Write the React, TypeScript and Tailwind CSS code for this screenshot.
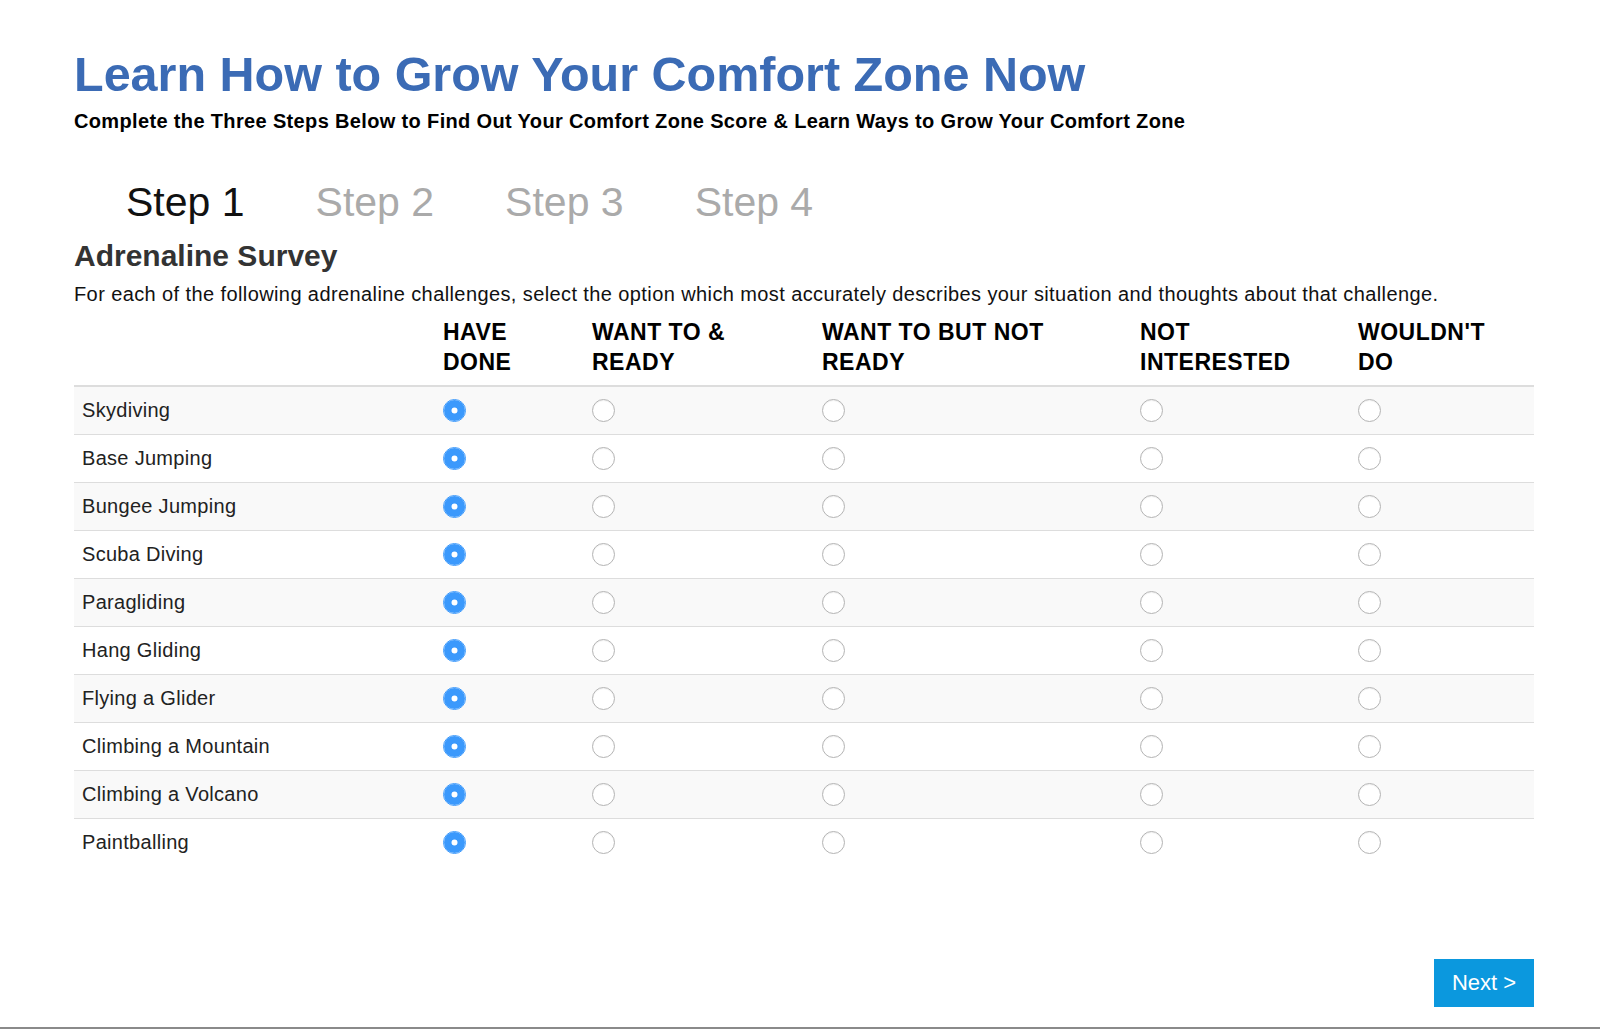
import { useState } from 'react';

const activities = [
  'Skydiving',
  'Base Jumping',
  'Bungee Jumping',
  'Scuba Diving',
  'Paragliding',
  'Hang Gliding',
  'Flying a Glider',
  'Climbing a Mountain',
  'Climbing a Volcano',
  'Paintballing',
];

const options = [
  { key: 'done', lines: ['HAVE', 'DONE'], width: 'w-[149px]' },
  { key: 'ready', lines: ['WANT TO &', 'READY'], width: 'w-[230px]' },
  { key: 'notready', lines: ['WANT TO BUT NOT', 'READY'], width: 'w-[318px]' },
  { key: 'notint', lines: ['NOT', 'INTERESTED'], width: 'w-[218px]' },
  { key: 'never', lines: ["WOULDN'T", 'DO'], width: 'w-[184px]' },
];

const steps = ['Step 1', 'Step 2', 'Step 3', 'Step 4'];

export default function App() {
  const [answers, setAnswers] = useState<Record<string, string>>(
    Object.fromEntries(activities.map(a => [a, 'done']))
  );

  return (
    <div className="min-h-[1029px] bg-white flex flex-col font-['Liberation_Sans',Arial,sans-serif] text-[#111]">
      <div className="flex-1 pl-[74px] pr-[66px] pt-[48px]">
        <h1 className="text-[48.5px] leading-[53px] font-bold text-[#3b6bb5]">
          Learn How to Grow Your Comfort Zone Now
        </h1>
        <p className="mt-[8px] text-[20px] leading-[24px] tracking-[0.35px] font-bold text-black">
          Complete the Three Steps Below to Find Out Your Comfort Zone Score &amp; Learn Ways to Grow Your Comfort Zone
        </p>

        <ul className="mt-[46px] flex gap-[71px] pl-[52px]">
          {steps.map((s, i) => (
            <li
              key={s}
              className={`text-[41px] leading-[46px] ${i === 0 ? 'text-[#111]' : 'text-[#aaaaaa]'}`}
            >
              {s}
            </li>
          ))}
        </ul>

        <h2 className="mt-[15px] text-[30px] leading-[32px] font-bold text-[#333]">Adrenaline Survey</h2>
        <p className="mt-[10px] text-[20px] leading-[24px] tracking-[0.4px]">
          For each of the following adrenaline challenges, select the option which most accurately describes your situation and thoughts about that challenge.
        </p>

        <table className="mt-[3px] w-[1460px] table-fixed border-collapse">
          <thead>
            <tr>
              <th className="w-[361px] border-b-2 border-[#dddddd] p-2" />
              {options.map(o => (
                <th
                  key={o.key}
                  className={`${o.width} border-b-2 border-[#dddddd] p-2 text-left align-bottom text-[23px] leading-[30px] tracking-[0.5px] font-bold text-black`}
                >
                  {o.lines[0]}
                  <br />
                  {o.lines[1]}
                </th>
              ))}
            </tr>
          </thead>
          <tbody>
            {activities.map((a, i) => (
              <tr key={a} className={i % 2 === 0 ? 'bg-[#f9f9f9]' : 'bg-white'}>
                <td className={`h-[48px] px-2 py-0 text-[20px] leading-[24px] tracking-[0.3px] text-[#222] ${i > 0 ? 'border-t border-[#dddddd]' : ''}`}>
                  {a}
                </td>
                {options.map(o => (
                  <td
                    key={o.key}
                    className={`h-[48px] py-0 pl-[8px] align-middle ${i > 0 ? 'border-t border-[#dddddd]' : ''}`}
                  >
                    <input
                      type="radio"
                      name={a}
                      checked={answers[a] === o.key}
                      onChange={() => setAnswers(prev => ({ ...prev, [a]: o.key }))}
                      className="block w-[23px] h-[23px] appearance-none rounded-full border border-[#b4b4b4] bg-white shadow-[inset_0_1px_1px_rgba(0,0,0,0.06)]
                                 checked:border-[#3b99fc] checked:shadow-[inset_0_0_0_7.5px_#3b99fc] cursor-pointer"
                    />
                  </td>
                ))}
              </tr>
            ))}
          </tbody>
        </table>
      </div>

      <div className="flex justify-end pr-[66px] pb-[20px]">
        <button className="w-[100px] h-[48px] bg-[#0b98de] text-white text-[22px] leading-none">
          Next &gt;
        </button>
      </div>
      <div className="h-[2px] bg-[#8a8a8a]" />
    </div>
  );
}
